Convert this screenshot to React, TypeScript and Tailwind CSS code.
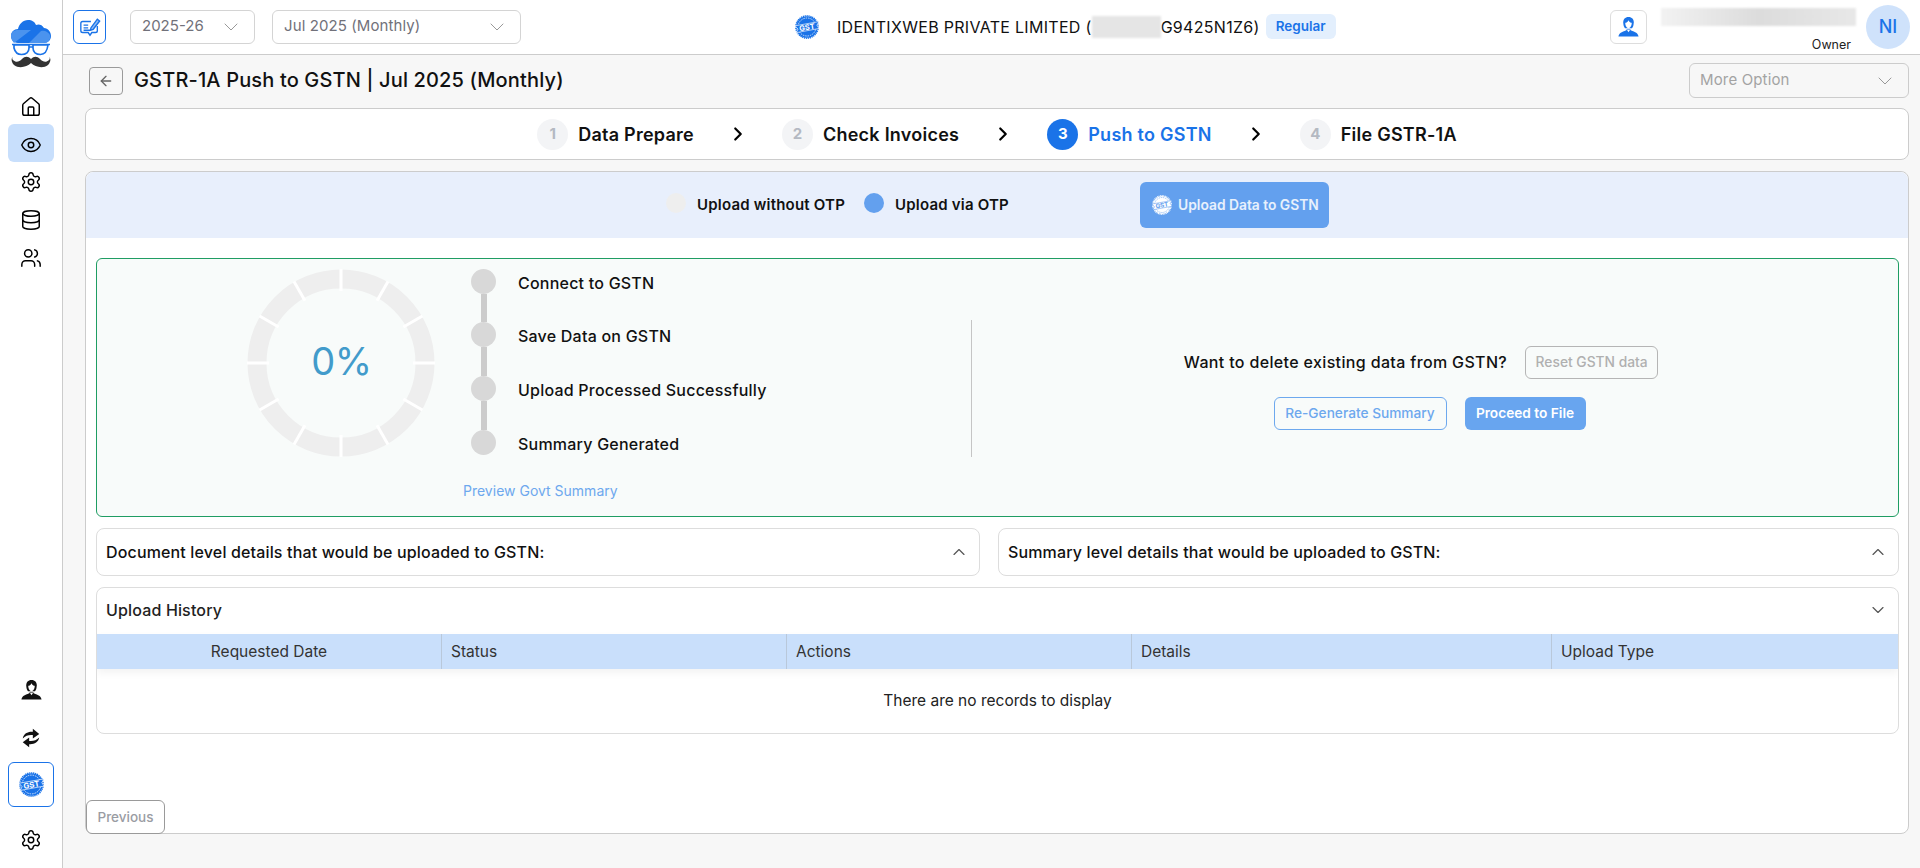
import React from "react";
import { ArrowLeft, ChevronDown, ChevronRight, ChevronUp, Database, Eye, House, Settings, Users } from "lucide-react";

function GstSeal({ size, color = "#1a73e8", fg = "#ffffff" }: { size: number; color?: string; fg?: string }) {
  return (
    <svg width={size} height={size} viewBox="0 0 40 40" className="shrink-0">
      <circle cx="20" cy="20" r="18" fill={color} />
      <circle cx="20" cy="20" r="18.6" fill="none" stroke={color} strokeWidth="2.4" strokeDasharray="2 1.2" />
      <circle cx="20" cy="20" r="15" fill="none" stroke={fg} strokeWidth="1.2" strokeDasharray="2.5 1.5" />
      <path d="M0 18 L40 11 L36.5 17 L40 22.5 L2 29.5 L5 23.5 Z" fill={color} stroke={fg} strokeWidth="1.1" />
      <text x="20" y="25" textAnchor="middle" fontSize="12.5" fontWeight="700" fill={fg} fontFamily="Inter, sans-serif" transform="rotate(-10 20 21)">GST</text>
    </svg>
  );
}

function Logo() {
  return (
    <svg width="40" height="48" viewBox="0 0 40 48">
      <path d="M7 23 C2 23 0 19 0 16 C0 12 3 9 7 9 C8 4 12 0 17 0 C21 0 24 2 25 5 C27 4 31 4 33 8 C37 8 40 12 40 16 C40 20 37 23 33 23 Z" fill="#1a73e8" />
      <path d="M3 23 C1 21 0 18 0 16 C0 12 3 10 7 10 L20 10 Z M18 23 L30 11 C34 10 37 12 39 15 C40 20 37 23 33 23 Z" fill="#4b93ee" />
      <path d="M1 24.5 H39 M3 25 H18 V28 C18 32 15 34.5 10.5 34.5 C6 34.5 4 32 3 28 Z M22 25 H37 C36 32 34 34.5 29.5 34.5 C25 34.5 22 32 22 28 Z M18 27 H22" fill="none" stroke="#1a73e8" strokeWidth="1.7" />
      <path d="M20 39 C17 36 14 36 11 39 C8 42 5 43 2 40 C1 39 1 38 2 37 C0 38 0 42 3 45 C8 49 16 47 20 43 C24 47 32 49 37 45 C40 42 40 38 38 37 C39 38 39 39 38 40 C35 43 32 42 29 39 C26 36 23 36 20 39 Z" fill="#333333" />
    </svg>
  );
}

function SupportIcon({ size, color }: { size: number; color: string }) {
  return (
    <svg width={size} height={size} viewBox="0 0 24 24">
      <path d="M12 1 C8 1 6 3.8 6 7 C6 10 6.6 12 8 14 H16 C17.4 12 18 10 18 7 C18 3.8 16 1 12 1 Z" fill={color} />
      <path d="M12 4.8 C11 7 9.5 7.6 8.3 7.8 C8.2 11 10 14 12 14 C14 14 15.8 11 15.7 7.8 C14.5 7.6 13 7 12 4.8 Z" fill="#ffffff" />
      <path d="M0.5 23.5 C1 19.5 4 18.4 9.5 16.2 L10 15 H14 L14.5 16.2 C20 18.4 23 19.5 23.5 23.5 Z" fill={color} />
      <path d="M10.2 15.6 L12 18.5 L13.8 15.6 Z" fill="#ffffff" />
    </svg>
  );
}

function SwapIcon() {
  return (
    <svg width="22" height="22" viewBox="0 0 24 24" fill="#111111">
      <path d="M3 12.5 C4 7 9 4.8 14 5.3 V2 L21 7.5 L14 12.5 V8.8 C10 8.3 6 9.3 3 12.5 Z" />
      <path d="M21 11.5 C20 17 15 19.2 10 18.7 V22 L3 16.5 L10 11.5 V15.2 C14 15.7 18 14.7 21 11.5 Z" />
    </svg>
  );
}

function EditIcon() {
  return (
    <svg width="22" height="22" viewBox="0 0 24 24" fill="none" stroke="#1a73e8" strokeWidth="1.5">
      <path d="M13 6 H4 a2 2 0 0 0 -2 2 v8 a2 2 0 0 0 2 2 h6 l2 3 l2 -3 h4 a2 2 0 0 0 2 -2 v-5" />
      <path d="M5 10 h5 M5 13 h5 M5 15.5 h7" />
      <path d="M13 13 L20 3.5 l2.5 2 L15.5 14.5 l-3 1 Z" fill="#8fbcf5" />
    </svg>
  );
}

function Ring() {
  const segs = Array.from({ length: 12 }, (_, i) => i * 30);
  return (
    <svg width="188" height="188" viewBox="0 0 188 188">
      <circle cx="94" cy="94" r="84" fill="none" stroke="#eeeeee" strokeWidth="19" />
      {segs.map((a) => (
        <rect key={a} x="92.5" y="0" width="3" height="22" fill="#ffffff" transform={`rotate(${a} 94 94)`} />
      ))}
    </svg>
  );
}

function Step({ n, label, active }: { n: number; label: string; active?: boolean }) {
  return (
    <div className="flex items-center gap-[10px]">
      <div className={active ? "w-[31px] h-[31px] rounded-full flex items-center justify-center text-[15px] font-bold bg-[#1a73e8] text-white" : "w-[31px] h-[31px] rounded-full flex items-center justify-center text-[15px] font-bold bg-[#f3f4f6] text-[#b4b9c2]"}>{n}</div>
      <span className={active ? "text-[18px] tracking-[0.25px] font-semibold text-[#1a73e8]" : "text-[18px] tracking-[0.25px] font-semibold text-[#111111]"}>{label}</span>
    </div>
  );
}

function Arrow() {
  return <ChevronRight size={22} strokeWidth={2.4} className="text-black mx-[33px]" />;
}

function Dot() {
  return <div className="w-[25px] h-[25px] rounded-full bg-[#d8d8d8] shrink-0" />;
}

function Line({ h }: { h: string }) {
  return <div className={`w-[6px] bg-[#cccccc] ml-[10px] ${h}`} />;
}

function TimelineRow({ label }: { label: string }) {
  return (
    <div className="h-[25px] flex items-center gap-[22px]">
      <Dot />
      <span className="text-[16px] font-medium tracking-[0.22px] text-[#111111] leading-[25px] mt-[3px]">{label}</span>
    </div>
  );
}

export default function App() {
  return (
    <div className="flex h-screen w-full overflow-hidden bg-[#f7f7f7] text-black font-['Inter',sans-serif]">
      <aside className="w-[63px] shrink-0 bg-white border-r border-[#cccccc] flex flex-col items-center justify-between">
        <div className="flex flex-col items-center w-full">
          <div className="mt-[20px] mb-[21px] flex justify-center"><Logo /></div>
          <div className="h-[35px] flex items-center"><House size={22} strokeWidth={1.6} /></div>
          <div className="h-[38px] w-[46px] rounded-md bg-[#c8dffc] flex items-center justify-center pt-[3px]"><Eye size={22} strokeWidth={1.6} /></div>
          <div className="h-[39px] flex items-center"><Settings size={22} strokeWidth={1.6} /></div>
          <div className="h-[38px] flex items-center"><Database size={22} strokeWidth={1.6} /></div>
          <div className="h-[38px] flex items-center"><Users size={22} strokeWidth={1.6} /></div>
        </div>
        <div className="flex flex-col items-center w-full pb-[17px]">
          <SupportIcon size={21} color="#111111" />
          <div className="mt-[25px] mb-[11px] h-[26px] flex items-center"><SwapIcon /></div>
          <div className="w-[46px] h-[45px] rounded-md border border-[#1a73e8] flex items-center justify-center"><GstSeal size={25} /></div>
          <div className="mt-[22px]"><Settings size={22} strokeWidth={1.6} /></div>
        </div>
      </aside>

      <div className="flex-1 min-w-0 flex flex-col">
        <header className="h-[55px] shrink-0 bg-white border-b border-[#cccccc] flex items-center pl-[10px] pr-[10px] pb-[1px]">
          <div className="w-[33px] h-[34px] rounded-md border border-[#1a73e8] flex items-center justify-center shrink-0"><EditIcon /></div>
          <div className="ml-[24px] w-[125px] h-[34px] rounded-md border border-[#d4d4d4] flex items-center justify-between pl-[11px] pr-[11px] text-[15px] text-[#71717a]">
            2025-26<ChevronDown size={24} strokeWidth={1} className="text-[#999999]" />
          </div>
          <div className="ml-[17px] w-[249px] h-[34px] rounded-md border border-[#d4d4d4] flex items-center justify-between pl-[11px] pr-[11px] text-[15px] tracking-[0.1px] text-[#71717a]">
            Jul 2025 (Monthly)<ChevronDown size={24} strokeWidth={1} className="text-[#999999]" />
          </div>
          <div className="ml-[274px] flex items-center">
            <GstSeal size={24} />
            <span className="ml-[18px] text-[16px] text-[#111111] tracking-[0.3px] whitespace-nowrap">IDENTIXWEB PRIVATE LIMITED (</span>
            <span className="w-[69px] h-[22px] bg-[#e5e5e5] blur-[1px] shrink-0" />
            <span className="text-[16px] text-[#111111] tracking-[0.3px] whitespace-nowrap">G9425N1Z6)</span>
            <span className="ml-[6px] h-[25px] w-[70px] rounded-md bg-[#e3effd] text-[#1a73e8] text-[13.5px] font-semibold flex items-center justify-center">Regular</span>
          </div>
          <div className="ml-auto flex items-center">
            <div className="w-[37px] h-[34px] rounded-md border border-[#dddddd] flex items-center justify-center"><SupportIcon size={21} color="#1a73e8" /></div>
            <div className="ml-[14px] w-[195px] h-[52px] flex flex-col items-end justify-between pt-[7px]">
              <div className="w-full h-[18px] bg-gradient-to-r from-[#f2f2f2] via-[#dcdcdc] to-[#e8e8e8] blur-[1px]" />
              <span className="text-[12.5px] text-[#222222] pr-[5px] leading-[16px]">Owner</span>
            </div>
            <div className="ml-[10px] w-[44px] h-[44px] rounded-full bg-[#cfe2fb] text-[#1a73e8] text-[18px] font-medium flex items-center justify-center">NI</div>
          </div>
        </header>

        <main className="flex-1 min-h-0 flex flex-col pl-[22px] pr-[11px] pb-[34px]">
          <div className="mt-[8px] h-[35px] shrink-0 flex items-center">
            <button className="ml-[4px] w-[34px] h-[28px] rounded border border-[#9a9a9a] flex items-center justify-center text-[#666666]"><ArrowLeft size={16} /></button>
            <h1 className="ml-[11px] -mt-[1px] text-[20px] tracking-[0.15px] font-medium text-[#111111] whitespace-nowrap">GSTR-1A Push to GSTN | Jul 2025 (Monthly)</h1>
            <div className="ml-auto w-[220px] h-[35px] rounded-md border border-[#cccccc] flex items-center justify-between pl-[10px] pr-[11px] text-[15px] tracking-[0.15px] text-[#a3a3a3]">
              More Option<ChevronDown size={24} strokeWidth={1} className="text-[#999999]" />
            </div>
          </div>

          <div className="mt-[10px] h-[52px] shrink-0 rounded-lg border border-[#cccccc] bg-white flex items-center justify-center">
            <Step n={1} label="Data Prepare" />
            <Arrow />
            <Step n={2} label="Check Invoices" />
            <Arrow />
            <Step n={3} label="Push to GSTN" active />
            <Arrow />
            <Step n={4} label="File GSTR-1A" />
          </div>

          <section className="mt-[11px] flex-1 min-h-0 rounded-lg border border-[#cccccc] bg-white flex flex-col">
            <div className="h-[66px] shrink-0 rounded-t-lg bg-[#e8effc] flex items-center pl-[580px]">
              <span className="w-[20px] h-[20px] rounded-full bg-[#eeeeee] -mt-[5px]" />
              <span className="ml-[11px] text-[15px] tracking-[0.2px] font-semibold text-[#111111]">Upload without OTP</span>
              <span className="ml-[19px] w-[20px] h-[20px] rounded-full bg-[#63a0ee] -mt-[5px]" />
              <span className="ml-[11px] text-[15px] tracking-[0.2px] font-semibold text-[#111111]">Upload via OTP</span>
              <button className="ml-[131px] w-[189px] h-[46px] rounded-md bg-[#63a0ee] text-white/85 text-[13.8px] font-semibold flex items-center justify-center gap-[6px] pl-[2px]">
                <GstSeal size={20} color="#ffffff" fg="#63a0ee" />Upload Data to GSTN
              </button>
            </div>

            <div className="mt-[20px] ml-[10px] mr-[9px] h-[259px] shrink-0 rounded-md border border-[#1f9d63] bg-[#f8fbfa] flex">
              <div className="w-[874px] shrink-0 flex flex-col pt-[10px]">
                <div className="flex">
                  <div className="ml-[150px] relative w-[188px] h-[188px] shrink-0">
                    <Ring />
                    <span className="absolute inset-0 flex items-center justify-center text-[38px] tracking-[-0.5px] text-[#429bcb] pb-[3px] pl-[1px]">0%</span>
                  </div>
                  <div className="ml-[36px] flex flex-col">
                    <TimelineRow label="Connect to GSTN" />
                    <Line h="h-[28px]" />
                    <TimelineRow label="Save Data on GSTN" />
                    <Line h="h-[29px]" />
                    <TimelineRow label="Upload Processed Successfully" />
                    <Line h="h-[29px]" />
                    <TimelineRow label="Summary Generated" />
                  </div>
                </div>
                <a className="ml-[366px] mt-[23px] text-[14px] text-[#6da8ee]">Preview Govt Summary</a>
              </div>
              <div className="flex-1 flex items-center pr-[11px]">
                <div className="w-px h-[137px] bg-[#c5c5c5] mt-[1px]" />
                <div className="flex-1 flex flex-col items-center">
                  <div className="mr-[17px] flex items-center gap-[18px]">
                    <span className="text-[16px] tracking-[0.35px] font-medium text-[#111111]">Want to delete existing data from GSTN?</span>
                    <button className="w-[133px] h-[33px] rounded-md border border-[#b5b5b5] text-[13.8px] font-medium text-[#b0b0b0]">Reset GSTN data</button>
                  </div>
                  <div className="mt-[18px] flex items-center gap-[18px]">
                    <button className="w-[173px] h-[33px] rounded-md border border-[#6da8ee] text-[13.7px] font-medium text-[#6da8ee]">Re-Generate Summary</button>
                    <button className="w-[121px] h-[33px] rounded-md bg-[#68a5ef] text-[13.7px] font-semibold text-white">Proceed to File</button>
                  </div>
                </div>
              </div>
            </div>

            <div className="mt-[11px] ml-[10px] mr-[9px] flex gap-[18px] shrink-0">
              <div className="w-[884px] h-[48px] rounded-lg border border-[#dddddd] bg-white flex items-center justify-between pl-[9px] pr-[10px]">
                <span className="text-[16px] tracking-[0.15px] font-medium text-[#111111]">Document level details that would be uploaded to GSTN:</span>
                <ChevronUp size={20} strokeWidth={1.4} className="text-[#555555]" />
              </div>
              <div className="flex-1 h-[48px] rounded-lg border border-[#dddddd] bg-white flex items-center justify-between pl-[9px] pr-[10px]">
                <span className="text-[16px] tracking-[0.15px] font-medium text-[#111111]">Summary level details that would be uploaded to GSTN:</span>
                <ChevronUp size={20} strokeWidth={1.4} className="text-[#555555]" />
              </div>
            </div>

            <div className="mt-[11px] ml-[10px] mr-[9px] h-[147px] shrink-0 rounded-lg border border-[#dddddd] bg-white flex flex-col overflow-hidden">
              <div className="h-[46px] shrink-0 flex items-center justify-between pl-[9px] pr-[10px] pb-[2px]">
                <span className="text-[16px] tracking-[0.15px] font-medium text-[#222222]">Upload History</span>
                <ChevronDown size={20} strokeWidth={1.4} className="text-[#555555]" />
              </div>
              <div className="h-[35px] shrink-0 grid grid-cols-[345px_345px_345px_420px_1fr] bg-[#c9dffb] shadow-[0_4px_8px_rgba(0,0,0,0.05)] text-[15.5px] text-[#333333]">
                <div className="flex items-center justify-center pt-[1px] border-r border-[#b9c8da]">Requested Date</div>
                <div className="flex items-center pt-[1px] pl-[9px] border-r border-[#b9c8da]">Status</div>
                <div className="flex items-center pt-[1px] pl-[9px] border-r border-[#b9c8da]">Actions</div>
                <div className="flex items-center pt-[1px] pl-[9px] border-r border-[#b9c8da]">Details</div>
                <div className="flex items-center pt-[1px] pl-[9px]">Upload Type</div>
              </div>
              <div className="flex-1 flex items-center justify-center text-[15.5px] text-[#222222]">There are no records to display</div>
            </div>

            <button className="mt-auto -mb-px w-[79px] h-[34px] rounded-md border border-[#9a9a9a] bg-white text-[13.5px] font-medium text-[#9a9ca3]">Previous</button>
          </section>
        </main>
      </div>
    </div>
  );
}
